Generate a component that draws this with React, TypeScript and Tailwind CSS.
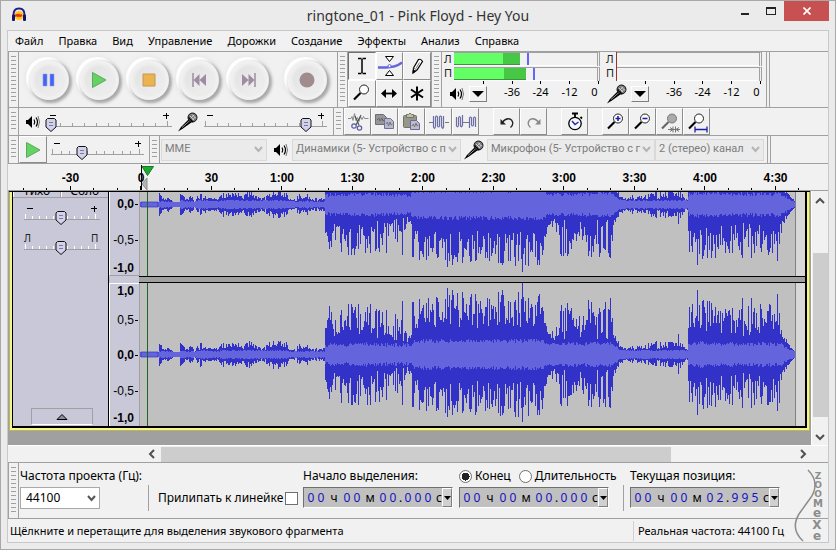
import type { ReactNode } from "react"
import { clsx } from "clsx"

const MENU = ["Файл", "Правка", "Вид", "Управление", "Дорожки", "Создание", "Эффекты", "Анализ", "Справка"]

/* ---------- waveform ---------- */

// x, quietest column, loudest column, rms
type Key = [number, number, number, number]

const ENVELOPE: Key[] = [
  [0, 2, 2, 2], [18, 2, 2, 2], [19, 8, 11, 2], [23, 4, 6, 2], [28, 4, 7, 2], [32, 2, 3, 2], [39, 2, 2, 2],
  [40, 9, 12, 3], [46, 3, 6, 2], [51, 5, 9, 2], [54, 2, 4, 2], [60, 4, 12, 3], [66, 4, 7, 3], [78, 4, 6, 2],
  [81, 6, 12, 3], [102, 5, 11, 3], [111, 6, 13, 3], [123, 3, 6, 3], [132, 7, 15, 3], [146, 7, 12, 3],
  [149, 3, 5, 2], [156, 3, 5, 2], [158, 5, 11, 2], [164, 4, 7, 2], [165, 7, 13, 3], [170, 3, 7, 2], [184, 3, 6, 2],
  [185, 18, 50, 8], [200, 17, 50, 8], [232, 18, 50, 9], [250, 10, 48, 8], [262, 8, 46, 8], [266, 9, 24, 8],
  [271, 12, 20, 8], [272, 24, 52, 11], [286, 27, 58, 12], [330, 26, 60, 12], [380, 26, 62, 12], [402, 28, 60, 13],
  [404, 26, 34, 11], [411, 15, 18, 8], [413, 14, 50, 9], [440, 14, 52, 9], [470, 14, 52, 10], [473, 14, 28, 9],
  [479, 7, 10, 4], [486, 4, 5, 3], [494, 4, 10, 3], [505, 4, 9, 3], [511, 4, 12, 3], [518, 5, 14, 3],
  [530, 6, 12, 3], [540, 6, 13, 3], [546, 4, 7, 3], [547, 4, 6, 3],
  [548, 26, 46, 8], [560, 22, 54, 10], [585, 20, 52, 9], [600, 17, 50, 9], [625, 17, 50, 9], [641, 16, 48, 9],
  [643, 10, 20, 7], [648, 8, 11, 4], [655, 2, 2, 2],
]

const PEAKS: Record<number, number> = {
  262: 53, 297: 56, 317: 61, 312: 64, 307: 66, 322: 62, 347: 56, 358: 62, 362: 64, 382: 71, 398: 58,
  448: 54, 470: 56, 538: 20, 552: 50, 557: 64, 602: 56, 611: 56, 629: 50, 637: 60,
}

function noise(seed: number) {
  let state = seed
  return () => {
    state = (state * 1664525 + 1013904223) % 4294967296
    return state / 4294967296
  }
}

function buildWave(seed: number, centre: number) {
  const shared = noise(77)
  const own = noise(seed)
  let peak = ""
  let rms = ""
  for (let x = 0; x <= 655; x++) {
    let i = 0
    while (i < ENVELOPE.length - 2 && ENVELOPE[i + 1]![0] <= x) i++
    const a = ENVELOPE[i]!
    const b = ENVELOPE[i + 1]!
    const t = Math.min(1, Math.max(0, (x - a[0]) / Math.max(1, b[0] - a[0])))
    const low = a[1] + (b[1] - a[1]) * t
    const high = a[2] + (b[2] - a[2]) * t
    const mid = a[3] + (b[3] - a[3]) * t
    const r = shared() ** 1.1
    const up = PEAKS[x] ?? low + (high - low) * Math.min(1, r * (0.8 + own() * 0.4))
    const down = PEAKS[x] ? PEAKS[x]! * 0.94 : low + (high - low) * Math.min(1, r * (0.8 + own() * 0.4))
    const body = Math.min(up, mid + (mid > 5 ? own() * 4 - 1 : own()))
    peak += `M${x + 1.5} ${centre - Math.round(up)}V${centre + Math.round(down) + 1}`
    rms += `M${x + 1.5} ${centre - Math.round(body)}V${centre + Math.round(body) + 1}`
  }
  return { peak, rms }
}

function Waveform({ seed, centre, className }: { seed: number; centre: number; className: string }) {
  const wave = buildWave(seed, centre)
  return (
    <svg className={clsx("block w-full bg-[#c0c0c0]", className)} aria-hidden>
      <rect x="657" width="100%" height="100%" fill="#d8d8d8" />
      <path d={wave.peak} stroke="#3232c8" />
      <path d={wave.rms} stroke="#6464dc" />
      <path d={`M2 ${centre - 2}h17v5H2z`} fill="none" stroke="#3232c8" strokeWidth=".7" />
      <path d="M656.5 0V200" stroke="#808080" />
      <path d="M.5 0V200" stroke="#a0a0a0" />
      <path d="M8.5 0V200" stroke="#1e6428" />
    </svg>
  )
}

/* ---------- small parts ---------- */

function Grip() {
  return (
    <div className="flex w-[11px] shrink-0 self-stretch border-x border-[#a0a0a0] px-[2px] py-1">
      <div className="w-full bg-[repeating-linear-gradient(#a0a0a0_0_1px,transparent_1px_4px)]" />
    </div>
  )
}

function ToolButton({ label, children, pressed }: { label: string; children: ReactNode; pressed?: boolean }) {
  return (
    <button
      type="button"
      aria-label={label}
      aria-pressed={pressed}
      className={clsx(
        "flex size-full items-center justify-center border",
        pressed
          ? "border-t-[#707070] border-r-white border-b-white border-l-[#707070]"
          : "border-t-white border-r-[#8c8c8c] border-b-[#8c8c8c] border-l-white",
      )}
    >
      {children}
    </button>
  )
}

function RoundButton({ label, children }: { label: string; children: ReactNode }) {
  return (
    <button
      type="button"
      aria-label={label}
      className="flex size-[40px] shrink-0 items-center justify-center rounded-full bg-[#f0f1f0] shadow-[2px_2px_3px_1px_#a8a8a8,-2px_-2px_1px_1px_#ffffff,-1px_-1px_4px_3px_#e6e6e6]"
    >
      <span className="flex size-[28px] items-center justify-center rounded-full bg-linear-to-br from-[#e2e2e2] to-[#efefef] shadow-[0_0_3px_2px_#e9e9e9]">
        {children}
      </span>
    </button>
  )
}

interface SliderProps {
  label: string
  width: number
  value: number
  ticks: number
  marks?: [string, string]
  light?: boolean
}

function Slider({ label, width, value, ticks, marks = ["−", "+"], light }: SliderProps) {
  const thumb = Math.round(4 + ((width - 10) * value) / 100)
  const step = (width - 6) / (ticks - 1)
  return (
    <div className="grid shrink-0">
      <svg width={width} height="26" className="col-start-1 row-start-1 overflow-visible" aria-hidden>
        {marks[0] === "−" ? (
          <path d={`M3 6.5h6M${width - 9} 6.5h6M${width - 5.5} 4v6`} stroke="#000" />
        ) : (
          <g className="font-['Noto_Sans'] text-[10px]" fill="#222">
            <text x="0" y="10">{marks[0]}</text>
            <text x={width - 9} y="10">{marks[1]}</text>
          </g>
        )}
        {Array.from({ length: ticks }, (_, i) => (
          <path key={i} d={`M${Math.round(1 + i * step) + 0.5} ${i === 0 || i === ticks - 1 ? 12 : 14}V17`} stroke={light ? "#fff" : "#a0a0a0"} />
        ))}
        <path d={`M0 17.5H${width}`} stroke="#a0a0a0" />
        <path
          d={`M${thumb - 3.5} 9.5h7l1.5 1.5v7l-5 4.5l-5 -4.5v-7z`}
          fill="#d2d2ea"
          stroke="#111"
        />
        <path d={`M${thumb - 2} 13.5h4M${thumb - 2} 16.5h4`} stroke="#7a7aa0" />
      </svg>
      <input type="range" aria-label={label} defaultValue={value} className="col-start-1 row-start-1 w-full opacity-0" />
    </div>
  )
}

function Speaker() {
  return (
    <svg width="15" height="14" viewBox="0 0 15 14" className="shrink-0" aria-hidden>
      <path d="M0 5h2l4-4v12l-4-4H0z" fill="#000" />
      <path d="M8 4.500q1.500 2.500 0 5M10 2.500q3 4.500 0 9" fill="none" stroke="#000" strokeWidth="1.200" />
      <path d="M12 1q3 6 0 12" fill="none" stroke="#777" />
    </svg>
  )
}

function Mic() {
  return (
    <svg width="20" height="20" viewBox="0 0 20 20" className="shrink-0" aria-hidden>
      <path d="M0 19.500L3 15L11 7l3 3l-9 6.500z" fill="#000" />
      <path d="M4 15.500l8-7" stroke="#999" />
      <circle cx="14.500" cy="5.500" r="4.500" fill="#777" stroke="#111" />
      <path d="M12 4l4 4M14 2.500l4 4M12 7l4-4M14 8.500l3.500-3.500" stroke="#ddd" strokeWidth=".8" />
      <path d="M10.500 5.500l4.500 4.500" stroke="#000" strokeWidth="1.500" />
    </svg>
  )
}

function DropButton({ label }: { label: string }) {
  return (
    <button
      type="button"
      aria-label={label}
      className="flex h-4 w-[18px] shrink-0 items-center justify-center border border-t-white border-r-[#808080] border-b-[#808080] border-l-white"
    >
      <svg width="12" height="6" aria-hidden>
        <path d="M0 0h12l-6 6z" />
      </svg>
    </button>
  )
}

function Combo({ label, value, className, disabled = true }: { label: string; value: string; className: string; disabled?: boolean }) {
  return (
    <div className={clsx("grid h-[22px] shrink-0 items-center", className)}>
      <select
        aria-label={label}
        disabled={disabled}
        className={clsx(
          "col-start-1 row-start-1 h-full w-full appearance-none overflow-hidden border opacity-100",
          disabled
            ? "border-[#d9d9d9] bg-[#ebebeb] pl-[3px] font-['Roboto'] text-[11px] text-[#7c7c7c]"
            : "border-[#a9a9a9] bg-white pl-[5px] text-[12px] text-black",
        )}
      >
        <option>{value}</option>
      </select>
      <svg width="9" height="7" className="col-start-1 row-start-1 mr-1 justify-self-end" aria-hidden>
        <path d="M1 1l3.500 4l3.500-4" fill="none" stroke={disabled ? "#b4b4b4" : "#555"} strokeWidth="2" />
      </svg>
    </div>
  )
}

/* ---------- meters ---------- */

function Meter({ levels, label, icon, red }: { levels?: [number, number, number][]; label: string; icon: ReactNode; red?: boolean }) {
  return (
    <div className="flex w-[162px] shrink-0 flex-col">
      <div className="flex h-[29px] pl-[2px]">
        <div className="flex w-[10px] flex-col text-[11px] leading-[14px] text-[#222]">
          <span>Л</span>
          <span>П</span>
        </div>
        <svg width="149" height="32" className="shrink-0" aria-hidden>
          {[0, 15].map((y, row) => (
            <g key={y}>
              <path d={`M0 ${y + 0.5}H144.500`} stroke="#a0a0a0" />
              <path d={`M0 ${y + 13.500}H143`} stroke="#fff" />
              <path d={`M143.500 ${y + 1}v13M145.500 ${y}v14`} stroke="#a0a0a0" />
              {levels?.[row] && (
                <>
                  <rect x="0" y={y + 1} width={levels[row]![1]} height="12" fill="#46c846" />
                  <rect x="0" y={y + 1} width={levels[row]![0]} height="12" fill="#64ff64" />
                  <path d={`M0 ${y + 12.500}H${levels[row]![1]}`} stroke="#3a963a" />
                  <rect x={levels[row]![2]} y={y + 1} width="2" height="12" fill="#6464ff" />
                </>
              )}
            </g>
          ))}
          {red && <path d="M.5 0v29" stroke="#963232" />}
          <path d="M29.500 29v3M58.500 29v3M86.500 29v3M115.500 29v3M144.500 29v3" stroke="#000" />
        </svg>
      </div>
      <div className="flex h-[26px] items-center">
        <span className="flex w-[27px] shrink-0 items-center justify-end pr-1">{icon}</span>
        <DropButton label={label} />
        <div className="flex flex-1 pb-1 pl-[11px] text-[11px] leading-4">
          <span className="w-[28px] text-center">-36</span>
          <span className="w-[29px] text-center">-24</span>
          <span className="w-[29px] text-center">-12</span>
          <span className="w-[21px] text-center">0</span>
        </div>
      </div>
    </div>
  )
}

/* ---------- icons ---------- */

const cursorIcon = (
  <svg width="20" height="22" aria-hidden>
    <path d="M6 3.500h3.500M10.500 3.500H14M10 4v14M6 18.500h3.500M10.500 18.500H14" stroke="#000" strokeWidth="1.500" />
  </svg>
)
const envelopeIcon = (
  <svg width="26" height="24" aria-hidden>
    <path d="M1 13.500h8q10 0 16-5" fill="none" stroke="#6464dc" strokeWidth="2.500" />
    <path d="M8.500 2.500h8l-4 5z" fill="#fff" stroke="#000" />
    <path d="M8.500 21.500h8l-4-5z" fill="#fff" stroke="#000" />
    <circle cx="12.500" cy="12" r="1.500" fill="#fff" stroke="#6464dc" />
  </svg>
)
const pencilIcon = (
  <svg width="20" height="20" aria-hidden>
    <path d="M6 17l.5-5L11.500 3.500q2.500-1 4 2L10 14z" fill="#fff" stroke="#000" strokeWidth="1.200" />
    <path d="M6 17l.3-3l2 1.200z" stroke="#000" />
    <path d="M6.500 12l3.500 2M12.500 6.500l-3.500 6" stroke="#777" />
  </svg>
)

function Lens({ fill = "#fff", children }: { fill?: string; children?: ReactNode }) {
  return (
    <svg width="24" height="24" aria-hidden>
      <path d="M10.500 12L4 18.500" stroke={fill === "#fff" ? "#000" : "#666"} strokeWidth="2.200" />
      <circle cx="14" cy="8.500" r="4.500" fill={fill} stroke={fill === "#fff" ? "#222" : "#777"} />
      {children}
    </svg>
  )
}

const shiftIcon = (
  <svg width="20" height="20" aria-hidden>
    <path d="M4 10.500h12" stroke="#000" strokeWidth="1.800" />
    <path d="M2 10.500l5-4.500v9zM18 10.500l-5-4.500v9z" />
  </svg>
)
const starIcon = (
  <svg width="20" height="20" aria-hidden>
    <path d="M10 3.500v14M4 6.500l12 8M16 6.500l-12 8" stroke="#000" strokeWidth="2" />
  </svg>
)

const cutIcon = (
  <svg width="22" height="22" aria-hidden>
    <path d="M1 7.500h3l1-2l1 4l1.500-7l1.500 7l1.500-3l1.500 4l1.500-5l1.500 3l1.500-3l1 2h4" fill="none" stroke="#8c8c8c" />
    <path d="M8 5l4 9M14 4l-5 10" stroke="#555" strokeWidth="1.200" />
    <circle cx="7" cy="15" r="2.200" fill="none" stroke="#5a5aa0" strokeWidth="1.200" />
    <circle cx="12.500" cy="17" r="2.200" fill="none" stroke="#5a5aa0" strokeWidth="1.200" />
  </svg>
)
const copyIcon = (
  <svg width="22" height="22" aria-hidden>
    <path d="M1.500 3.500h8l3 3v7h-11z" fill="#96969a" stroke="#6e6e6e" />
    <path d="M3 9l2-2l1 3l2-3l1 3l2-2" fill="none" stroke="#666" />
    <path d="M10.500 7.500h6l3 3v7h-9z" fill="#b8b8c6" stroke="#7070a0" />
    <path d="M12 13l1.500-2l1 4l1.500-4l1 3l1.500-1" fill="none" stroke="#777" />
  </svg>
)
const pasteIcon = (
  <svg width="22" height="22" aria-hidden>
    <rect x="2.500" y="4.500" width="13" height="12" rx="1" fill="#96968a" stroke="#72726a" />
    <path d="M5.500 6.500v-3h2q1.500-3 3 0h2v3z" fill="#c0c0a4" stroke="#72726a" />
    <path d="M9.500 9.500h6l3 3v6h-9z" fill="#bcbcca" stroke="#6a6aa0" />
    <path d="M11 15l1.500-2l1 3l1.500-4l1 3l1.500-1" fill="none" stroke="#777" />
  </svg>
)
const trimIcon = (
  <svg width="22" height="22" aria-hidden>
    <path d="M1 11.500h4M17 11.500h4" stroke="#777" />
    <path d="M5.500 5v11q1.500 3 2-1V6q1-2 2 0v9q1 2 2 0V6q1-2 2 0v9q1 4 2 1V5" fill="none" stroke="#6c6ca6" strokeWidth="1.200" />
  </svg>
)
const silenceIcon = (
  <svg width="22" height="22" aria-hidden>
    <path d="M1.500 6v9q1.500 2 2-1V7q1-3 2 0v8q1 2 2-1V4M14.500 17V7q1-2 2 0v7q1 2 2 0V7q1-2 2 0v9" fill="none" stroke="#6c6ca6" strokeWidth="1.200" />
    <path d="M7.500 11.500h7" stroke="#777" />
  </svg>
)

function Arrow({ color, flip }: { color: string; flip?: boolean }) {
  return (
    <svg width="20" height="20" viewBox="0 0 20 20" className={clsx(flip && "-scale-x-100")} aria-hidden>
      <path d="M5 10.500q5-6 9.500-2.500q3 4-1 7.500" fill="none" stroke={color} strokeWidth="1.300" />
      <path d="M3.500 7v5.500h5.500z" fill={color} />
    </svg>
  )
}

const clockIcon = (
  <svg width="20" height="22" aria-hidden>
    <path d="M7 2.500h6M10 3v3M15.500 6l1.500 1.500" stroke="#000" strokeWidth="1.800" />
    <circle cx="10" cy="12.500" r="6.200" fill="#f4f8fc" stroke="#000" strokeWidth="1.300" />
    <path d="M7 10l3 3.500l3.500-2.500" fill="none" stroke="#2828b4" strokeWidth="1.500" />
  </svg>
)

/* ---------- ruler ---------- */

const RULER = ["-30", "0", "30", "1:00", "1:30", "2:00", "2:30", "3:00", "3:30", "4:00", "4:30"]

function Ruler() {
  return (
    <svg className="block h-[27px] w-full shrink-0" aria-hidden>
      {RULER.map((text, i) => (
        <text key={text} x={62.5 + i * 70.5} y="18" textAnchor="middle" className="font-['Liberation_Sans'] text-[12px] font-bold">
          {text}
        </text>
      ))}
      {Array.from({ length: 34 }, (_, i) => (
        <path key={i} d={`M${Math.floor(15 + i * 23.5) + 0.5} ${i % 3 === 2 ? 22 : 24}V26`} stroke="#000" />
      ))}
      <path d="M133.500 1v25" stroke="#000" />
      <path d="M139 14v12l-5-6z" fill="#b4b4b4" stroke="#909090" />
      <path d="M134 2.500h11.500l-6 9z" fill="#1eaa32" stroke="#147828" />
      <path d="M0 26.500h820" stroke="#a0a0a0" />
    </svg>
  )
}

function Scale({ rows, className }: { rows: [string, number][]; className: string }) {
  return (
    <svg width="30" className={clsx("block border-l border-white", className)} aria-hidden>
      {rows.map(([text, y]) => (
        <g key={text}>
          <text
            x="24"
            y={y + 4}
            textAnchor="end"
            className={clsx("font-['Liberation_Sans'] text-[12px]", text.endsWith("5") ? "font-normal" : "font-bold")}
          >
            {text}
          </text>
          {!text.endsWith("1,0") && <path d={`M25 ${y + 0.5}h3`} stroke="#000" />}
        </g>
      ))}
    </svg>
  )
}

/* ---------- time fields ---------- */

function TimeField({ label, parts }: { label: string; parts: [string, string, string, string] }) {
  const digits = (text: string) =>
    [...text].map((char, i) => (
      <span key={i} className="w-[10px] text-center text-[#1414c0]">
        {char}
      </span>
    ))
  return (
    <div
      role="group"
      aria-label={label}
      className="flex h-[21px] w-[150px] items-center border border-t-[#707070] border-r-white border-b-white border-l-[#707070] bg-[#c0c0c0] pl-[2px] leading-[18px]"
    >
      {digits(parts[0])}
      <span className="w-4 text-center">ч</span>
      {digits(parts[1])}
      <span className="w-4 text-center">м</span>
      {digits(parts[2])}
      <span className="w-[5px] text-center">.</span>
      {digits(parts[3])}
      <span className="w-[9px] text-right">с</span>
      <button
        type="button"
        aria-label="Формат времени"
        className="ml-auto flex h-full w-[10px] items-center justify-center border border-t-white border-r-[#808080] border-b-[#808080] border-l-white bg-[#d0d0d0]"
      >
        <svg width="7" height="4" className="shrink-0" aria-hidden>
          <path d="M0 0h7L3.500 4z" />
        </svg>
      </button>
    </div>
  )
}

function Chevron({ d }: { d: string }) {
  return (
    <svg width="10" height="10" aria-hidden>
      <path d={d} fill="none" stroke="#505050" strokeWidth="2" />
    </svg>
  )
}

/* ---------- window ---------- */

export default function App() {
  return (
    <div className="flex min-h-screen flex-col border border-[#a8a8a8] bg-[#ebebeb] px-[6px] pb-[6px] font-['Noto_Sans',sans-serif] text-black">
      <header className="grid h-[29px] shrink-0 grid-cols-[1fr_auto_1fr]">
        <svg width="16" height="16" viewBox="0 0 16 16" className="mt-[6px] ml-1 shrink-0" aria-hidden>
          <circle cx="8" cy="8.500" r="4.500" fill="#ffc814" />
          <path d="M4 9l2-1l1 1l1-1l1 1l2-1" fill="none" stroke="#e63214" strokeWidth="2" />
          <path d="M2.500 9Q2 1.500 8 1.500T13.500 9" fill="none" stroke="#1e1e8c" strokeWidth="2" />
          <rect x="1" y="7.500" width="3" height="6.500" rx="1" fill="#14146e" />
          <rect x="12" y="7.500" width="3" height="6.500" rx="1" fill="#14146e" />
        </svg>
        <h1 className="self-center text-[14px] leading-5 text-[#333]">ringtone_01 - Pink Floyd - Hey You</h1>
        <div className="flex items-start justify-end">
          <button type="button" aria-label="Свернуть" className="flex h-5 w-[26px] items-center justify-center">
            <span className="mt-[5px] h-[2px] w-2 bg-[#222]" />
          </button>
          <button type="button" aria-label="Развернуть" className="flex h-5 w-[26px] items-center justify-center">
            <span className="h-2 w-[10px] border border-t-2 border-[#222]" />
          </button>
          <button type="button" aria-label="Закрыть" className="flex h-5 w-[45px] items-center justify-center bg-[#c75050]">
            <svg width="8" height="8" aria-hidden>
              <path d="M.5 .5l7 7M7.500 .5l-7 7" stroke="#fff" strokeWidth="1.600" />
            </svg>
          </button>
        </div>
      </header>

      <main className="flex flex-1 flex-col border border-[#c8c8c8] bg-[#f0f1f0]">
        <nav className="flex h-[21px] shrink-0 items-center gap-[15px] border-b border-[#a0a0a0] pl-[7px] text-[11px] leading-4">
          {MENU.map((item) => (
            <button key={item} type="button">
              {item}
            </button>
          ))}
        </nav>

        <div className="flex h-14 shrink-0 border-b border-[#a0a0a0]">
          <Grip />
          <div className="flex w-[318px] shrink-0 items-center gap-[10px] pl-[10px]">
            <RoundButton label="Пауза">
              <svg width="14" height="14" aria-hidden>
                <path d="M1 1h4v12H1zM8 1h4v12H8z" fill="#4664f0" stroke="#8ca0f0" strokeWidth=".6" />
              </svg>
            </RoundButton>
            <RoundButton label="Воспроизвести">
              <svg width="16" height="18" aria-hidden>
                <path d="M1.500 1.500v15l13.500-7.500z" fill="#64d264" stroke="#5aaa5a" />
              </svg>
            </RoundButton>
            <RoundButton label="Остановить">
              <svg width="14" height="14" aria-hidden>
                <path d="M1 1h12v12H1z" fill="#ebb450" stroke="#c89650" />
              </svg>
            </RoundButton>
            <RoundButton label="К началу">
              <svg width="14" height="14" aria-hidden>
                <path d="M1 0v14" stroke="#9c8c9c" strokeWidth="1.500" />
                <path d="M7.500 1v12L1.500 7zM14 1v12L7.500 7z" fill="#9c8ca4" />
              </svg>
            </RoundButton>
            <RoundButton label="К концу">
              <svg width="14" height="14" aria-hidden>
                <path d="M13 0v14" stroke="#9c8c9c" strokeWidth="1.500" />
                <path d="M0 1v12l6.500-6zM6.500 1v12l6-6z" fill="#9c8ca4" />
              </svg>
            </RoundButton>
            <div className="ml-2">
              <RoundButton label="Записать">
                <svg width="16" height="16" aria-hidden>
                  <circle cx="8" cy="8" r="7.500" fill="#a08c8c" />
                </svg>
              </RoundButton>
            </div>
          </div>
          <Grip />
          <div className="grid w-[83px] shrink-0 grid-cols-3 grid-rows-2">
            <ToolButton label="Выделение" pressed>{cursorIcon}</ToolButton>
            <ToolButton label="Огибающая">{envelopeIcon}</ToolButton>
            <ToolButton label="Изменение семплов">{pencilIcon}</ToolButton>
            <ToolButton label="Масштаб"><Lens /></ToolButton>
            <ToolButton label="Перемещение">{shiftIcon}</ToolButton>
            <ToolButton label="Мультиинструмент">{starIcon}</ToolButton>
          </div>
          <Grip />
          <Meter label="Меню индикатора воспроизведения" icon={<Speaker />} levels={[[49, 66, 73], [50, 72, 79]]} />
          <Meter label="Меню индикатора записи" icon={<Mic />} red />
          <div className="w-1 border-x border-[#a0a0a0]" />
        </div>

        <div className="flex h-7 shrink-0 items-center border-b border-[#a0a0a0]">
          <Grip />
          <div className="flex w-[314px] shrink-0 items-center pl-[7px]">
            <Speaker />
            <div className="ml-[6px]">
              <Slider label="Громкость воспроизведения" width={125} value={0} ticks={11} />
            </div>
            <div className="mx-[6px]">
              <Mic />
            </div>
            <Slider label="Громкость записи" width={123} value={87} ticks={11} />
          </div>
          <Grip />
          <div className="grid h-full w-[135px] shrink-0 grid-cols-5">
            <ToolButton label="Вырезать">{cutIcon}</ToolButton>
            <ToolButton label="Копировать">{copyIcon}</ToolButton>
            <ToolButton label="Вставить">{pasteIcon}</ToolButton>
            <ToolButton label="Обрезать края">{trimIcon}</ToolButton>
            <ToolButton label="Заполнить тишиной">{silenceIcon}</ToolButton>
          </div>
          <div className="ml-[14px] grid h-full w-[54px] shrink-0 grid-cols-2">
            <ToolButton label="Отменить"><Arrow color="#222" /></ToolButton>
            <ToolButton label="Повторить"><Arrow color="#888" flip /></ToolButton>
          </div>
          <div className="ml-[14px] h-full w-[27px] shrink-0">
            <ToolButton label="Синхронизация">{clockIcon}</ToolButton>
          </div>
          <div className="ml-[14px] grid h-full w-[108px] shrink-0 grid-cols-4">
            <ToolButton label="Приблизить">
              <Lens><path d="M11.500 8.500h5M14 6v5" stroke="#1e1eaa" strokeWidth="1.600" /></Lens>
            </ToolButton>
            <ToolButton label="Отдалить">
              <Lens><path d="M11.500 8.500h5" stroke="#1e1eaa" strokeWidth="1.600" /></Lens>
            </ToolButton>
            <ToolButton label="Показать выделение">
              <Lens fill="#aaa"><path d="M10 19.500h12M15 16.500v6M17.500 16.500v6M12 17.500l3 2l-3 2M21 17.500l-3 2l3 2" fill="none" stroke="#777" /></Lens>
            </ToolButton>
            <ToolButton label="Показать весь проект">
              <Lens><path d="M10 19.500h12M10 16.500v6M22 16.500v6" stroke="#1e1eaa" strokeWidth="1.300" /></Lens>
            </ToolButton>
          </div>
        </div>

        <div className="flex h-7 shrink-0 items-center border-b border-[#a0a0a0]">
          <Grip />
          <div className="h-full w-[28px] shrink-0">
            <ToolButton label="Воспроизвести на скорости">
              <svg width="16" height="18" aria-hidden>
                <path d="M1.500 1.500v15l13.500-7.500z" fill="#64d264" stroke="#5aaa5a" />
              </svg>
            </ToolButton>
          </div>
          <div className="w-[102px] shrink-0 pl-1">
            <Slider label="Скорость воспроизведения" width={93} value={32} ticks={11} />
          </div>
          <Grip />
          <Combo label="Аудиосистема" value="MME" className="ml-px w-[106px]" />
          <div className="ml-[7px] flex w-[18px] items-center"><Speaker /></div>
          <Combo label="Устройство воспроизведения" value="Динамики (5- Устройство с п" className="w-[169px]" />
          <div className="mx-[3px]"><Mic /></div>
          <Combo label="Устройство записи" value="Микрофон (5- Устройство с г" className="w-[168px]" />
          <Combo label="Каналы записи" value="2 (стерео) канал" className="w-[109px]" />
          <div className="ml-[3px] w-1 self-stretch border-x border-[#a0a0a0]" />
        </div>

        <Ruler />

        <div className="flex flex-1">
          <div className="min-w-0 flex-1 bg-[#a0a0a0] pr-px pl-px">
            <div className="border-t border-black">
              <section className="border-r border-b border-l border-[#b4b464]">
                <div className="border-r-2 border-b-2 border-l-2 border-[#f5f58c]">
                  <div className="flex border-r-2 border-b-2 border-l border-black bg-[#c8c8d8]">
                    <div className="flex w-[95px] shrink-0 flex-col">
                      <div className="grid h-[6px] shrink-0 grid-cols-2 border-b border-[#a0a0a0]">
                        <button type="button" className="flex items-end justify-center overflow-hidden border-r border-l border-r-[#a0a0a0] border-l-white text-[12px] leading-[13px]">
                          Тихо
                        </button>
                        <button type="button" className="flex items-end justify-center overflow-hidden border-l border-white text-[12px] leading-[13px]">
                          Соло
                        </button>
                      </div>
                      <div className="mt-1 flex flex-col gap-1 pl-[11px]">
                        <Slider label="Усиление" width={76} value={50} ticks={11} light />
                        <Slider label="Баланс" width={76} value={50} ticks={11} marks={["Л", "П"]} light />
                      </div>
                      <button
                        type="button"
                        aria-label="Свернуть дорожку"
                        className="mt-auto mb-px ml-[18px] flex h-[17px] w-[62px] items-center justify-center border border-t-[#a0a0a0] border-r-[#a0a0a0] border-b-white border-l-[#a0a0a0]"
                      >
                        <svg width="12" height="8" aria-hidden>
                          <path d="M1 6.500h10l-5-5z" fill="#8c8ca0" stroke="#000" />
                        </svg>
                      </button>
                    </div>
                    <div className="w-[31px] shrink-0 border-l border-black">
                      <Scale rows={[["0,0", 12], ["-0,5", 48], ["-1,0", 76]]} className="h-[84px] border-b border-b-[#a0a0a0]" />
                      <div className="h-[7px]" />
                      <Scale rows={[["1,0", 7], ["0,5", 36], ["0,0", 71], ["-0,5", 107], ["-1,0", 134]]} className="h-[143px] border-t border-t-white" />
                    </div>
                    <div className="min-w-0 flex-1">
                      <Waveform seed={11} centre={12} className="h-[84px]" />
                      <div className="h-[7px] border-y border-black bg-[#a0a0a0]" />
                      <Waveform seed={42} centre={71} className="h-[143px]" />
                    </div>
                  </div>
                </div>
              </section>
            </div>
          </div>
          <div className="flex w-[17px] shrink-0 flex-col items-center border-l border-white">
            <div className="flex h-[62px] flex-col pt-[5px]"><Chevron d="M1 7l4-4l4 4" /></div>
            <div className="h-[164px] w-[15px] bg-[#cdcdcd]" />
            <div className="mt-auto pb-[3px]"><Chevron d="M1 3l4 4l4-4" /></div>
          </div>
        </div>

        <div className="flex h-[17px] shrink-0 items-center border-t border-white pr-[20px] pl-[139px]">
          <Chevron d="M7 1l-4 4l4 4" />
          <div className="ml-1 flex h-[15px] flex-1">
            <div className="w-4/5 bg-[#cdcdcd]" />
          </div>
          <Chevron d="M3 1l4 4l-4 4" />
        </div>

        <div className="flex h-[57px] shrink-0 border-y border-[#a0a0a0] text-[12px] leading-4">
          <Grip />
          <div className="flex w-[129px] shrink-0 flex-col gap-[3px] pt-[5px] pl-px">
            <span className="whitespace-nowrap">Частота проекта (Гц):</span>
            <Combo label="Частота проекта (Гц)" value="44100" className="w-20" disabled={false} />
          </div>
          <label className="mt-[22px] flex h-[26px] shrink-0 items-center border-l border-[#a0a0a0] pl-[9px] whitespace-nowrap">
            <span className="w-[127px]">Прилипать к линейке</span>
            <input type="checkbox" className="size-[13px] appearance-none border border-[#707070] bg-white" />
          </label>
          <div className="ml-[5px] flex shrink-0 flex-col gap-[3px] pt-[5px]">
            <span>Начало выделения:</span>
            <TimeField label="Начало выделения" parts={["00", "00", "00", "000"]} />
          </div>
          <div className="ml-[6px] flex shrink-0 flex-col gap-[3px] pt-[5px]">
            <div className="flex w-[160px] gap-2 whitespace-nowrap">
              <label className="flex items-center gap-[3px]">
                <input type="radio" name="selection" defaultChecked className="size-[13px] appearance-none rounded-full border border-[#707070] bg-white bg-[radial-gradient(#222_0_4px,white_4px)]" />
                Конец
              </label>
              <label className="flex items-center gap-[3px]">
                <input type="radio" name="selection" className="size-[13px] appearance-none rounded-full border border-[#707070] bg-white" />
                Длительность
              </label>
            </div>
            <TimeField label="Конец выделения" parts={["00", "00", "00", "000"]} />
          </div>
          <div className="mt-[22px] ml-1 h-[26px] border-l border-[#a0a0a0]" />
          <div className="ml-[6px] flex shrink-0 flex-col gap-[3px] pt-[5px]">
            <span>Текущая позиция:</span>
            <TimeField label="Текущая позиция" parts={["00", "00", "02", "995"]} />
          </div>
        </div>

        <footer className="relative flex h-[23px] shrink-0 items-center text-[11px] leading-4">
          <span className="flex-1 pl-[2px]">Щёлкните и перетащите для выделения звукового фрагмента</span>
          <span className="flex h-5 w-[195px] items-center border-l border-[#d2d2d2] pl-1">Реальная частота: 44100 Гц</span>
          <svg width="34" height="73" className="absolute right-0 bottom-0 font-['DejaVu_Sans']" aria-hidden>
            <path d="M14 1Q21 8 21 16T15 31L5 45Q-4 60 9 72" fill="none" stroke="#8c8c8c" strokeWidth="1.500" />
            <g fill="#8c8c8c" textAnchor="middle" className="font-bold">
              <text x="24" y="10" className="text-[9px]">Z</text>
              <text x="24" y="19" className="text-[9px]">O</text>
              <text x="24" y="28" className="text-[9px]">O</text>
              <text x="24" y="38" className="text-[10px]">M</text>
              <text x="23" y="48" className="text-[12px]">e</text>
              <text x="23" y="60" className="text-[12px]">X</text>
              <text x="23" y="71" className="text-[12px]">e</text>
            </g>
          </svg>
        </footer>
      </main>
    </div>
  )
}
